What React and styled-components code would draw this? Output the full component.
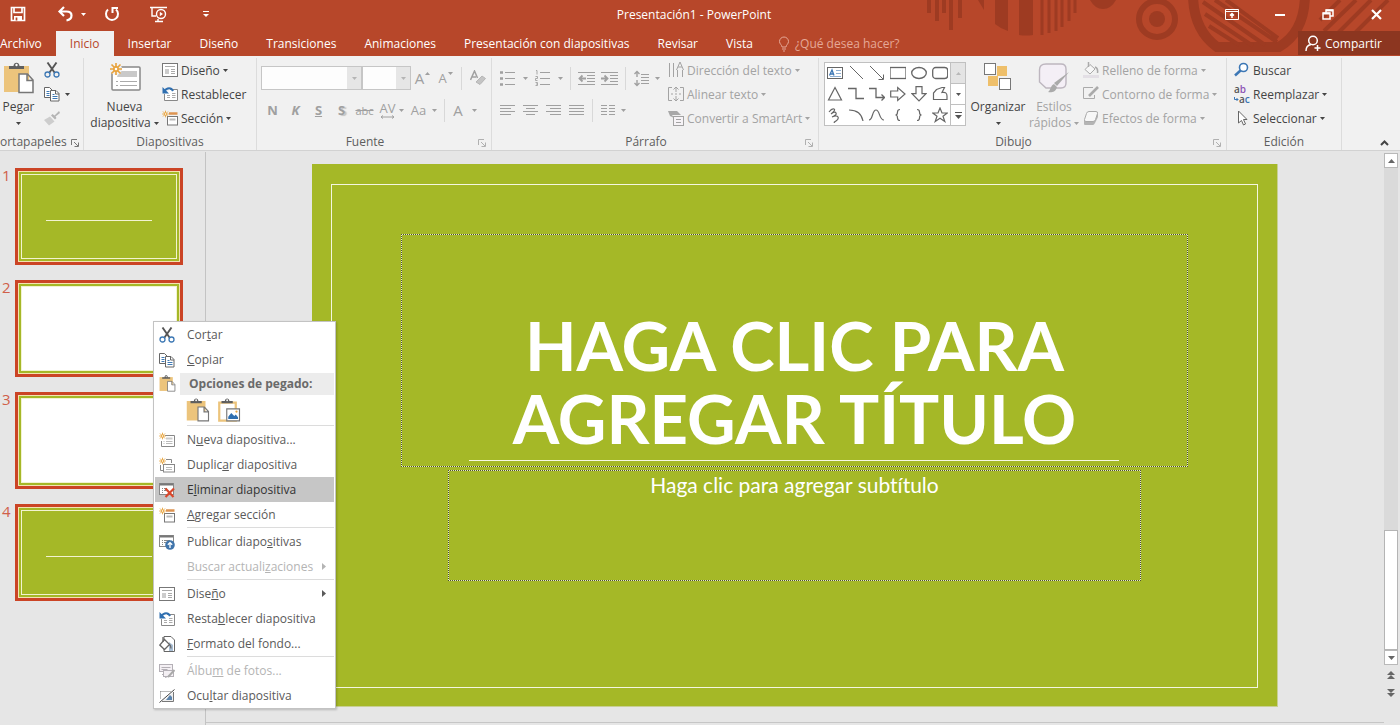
import React from 'react'
import styled, { createGlobalStyle } from "styled-components"

const GlobalStyle = createGlobalStyle`
  * { box-sizing: border-box; }
  body {
    margin: 0;
    font-family: "Open Sans", "Noto Sans", sans-serif;
    font-size: 12px;
    color: #444;
    background: #e6e6e6;
  }
  button, select {
    font: inherit;
    color: inherit;
    background: none;
    border: 0;
    padding: 0;
    margin: 0;
  }
`;

const Page = styled.div`
  display: flex;
  flex-direction: column;
  min-height: 100vh;
  overflow: hidden;
`;

/* ---------- title bar ---------- */

const Header = styled.header`
  position: relative;
  background: #b7472a;
  color: #fff;
`;

const Pattern = styled.svg`
  position: absolute;
  top: 0;
  right: 0;
  color: #9e3b22;
`;

const TitleRow = styled.div`
  position: relative;
  display: grid;
  grid-template-columns: 1fr auto 1fr;
  align-items: center;
  height: 26px;
  margin-right: 12px;
`;

const QuickAccess = styled.div`
  display: flex;
  align-items: center;
  gap: 15px;
  padding-left: 2px;
`;

const QuickButton = styled.button`
  display: flex;
  align-items: center;
  justify-content: center;
  gap: 8px;
  width: ${p => p.$wide ? 44 : 32}px;
  margin-right: ${p => p.$wide ? -12 : 0}px;
  height: 26px;
`;

const WindowTitle = styled.h1`
  margin: 0;
  font-size: 12px;
  font-weight: 400;
  line-height: 26px;
  padding-top: 2px;
`;

const WindowButtons = styled.div`
  display: flex;
  justify-content: flex-end;
  margin-right: -12px;
`;

const WindowButton = styled.button`
  display: flex;
  align-items: center;
  justify-content: center;
  width: 48px;
  height: 26px;
`;

const TabRow = styled.nav`
  position: relative;
  display: flex;
  align-items: stretch;
  height: 30px;
  padding-top: 5px;
`;

const Tab = styled.button`
  height: 25px;
  padding: 0 ${p => p.$first ? "14px 0 0" : "14px"};
  background: ${p => p.$active ? "#f1f1f1" : "none"};
  color: ${p => p.$active ? "#b7472a" : "#fff"};
  white-space: nowrap;
`;

const TellMe = styled.button`
  display: flex;
  align-items: center;
  gap: 5px;
  height: 25px;
  padding-left: 11px;
  color: #e5a897;
`;

const Share = styled.button`
  display: flex;
  align-items: center;
  gap: 4px;
  height: 24px;
  width: 102px;
  margin-left: auto;
  padding-left: 7px;
  background: #8c3620;
`;

/* ---------- ribbon ---------- */

const Ribbon = styled.div`
  display: flex;
  height: 95px;
  padding-top: 2px;
  background: #f1f1f1;
  border-bottom: 1px solid #d2d2d2;
`;

const GroupBox = styled.section`
  display: flex;
  flex-direction: column;
  flex: none;
  width: ${p => p.$width}px;
  border-right: 1px solid #dcdcdc;
`;

const GroupBody = styled.div`
  display: flex;
  height: 76px;
  padding-left: ${p => p.$pad || 0}px;
`;

const GroupFooter = styled.div`
  display: flex;
  align-items: center;
  height: 16px;
`;

const GroupName = styled.span`
  flex: 1;
  text-align: center;
  line-height: 16px;
  color: #5e5e5e;
`;

const Launcher = styled.button`
  width: 18px;
  height: 16px;
  color: ${p => p.$off ? "#b0b0b0" : "#777"};
`;

const Big = styled.button`
  display: flex;
  flex-direction: column;
  align-items: center;
  flex: none;
  width: ${p => p.$width}px;
  padding-top: 4px;
  color: ${p => p.$off ? "#a3a3a3" : "#444"};
  line-height: 16px;
  white-space: nowrap;
`;

const BigIcon = styled.span`
  flex: none;
  height: 37px;
`;

const BigLine = styled.span`
  display: flex;
  align-items: center;
  justify-content: center;
  gap: 3px;
  height: 16px;
`;

const Column = styled.div`
  display: flex;
  flex-direction: column;
  flex: none;
`;

const Small = styled.button`
  display: flex;
  align-items: center;
  gap: 3px;
  height: 24px;
  color: ${p => p.$off ? "#a3a3a3" : "#444"};
  white-space: nowrap;
`;

const ClipIcon = styled.span`
  display: flex;
  margin-left: 7px;
  margin-right: 2px;
`;

const ToolRows = styled.div`
  padding-top: 4px;
  flex: none;
  width: ${p => p.$width}px;
`;

const ToolRow = styled.div`
  display: flex;
  align-items: center;
  height: 32px;
`;

const Tool = styled.button`
  display: flex;
  align-items: center;
  justify-content: center;
  gap: ${p => p.$gap || 6}px;
  flex: none;
  width: ${p => p.$width || 23}px;
  height: 24px;
  color: #a0a0a0;
  font-size: ${p => p.$size || 13}px;
  font-weight: ${p => p.$bold ? 700 : 400};
  font-style: ${p => p.$italic ? "italic" : "normal"};
  text-decoration: ${p => p.$deco || "none"};
  text-shadow: ${p => p.$shadow ? "2px 1px 1px #c4c4c4" : "none"};
`;

const AvText = styled.span`
  line-height: 13px;
`;

const Rule = styled.span`
  flex: none;
  width: 1px;
  height: 23px;
  margin: 0 4px;
  background: #d8d8d8;
`;

const Combo = styled.label`
  position: relative;
  flex: none;
  width: ${p => p.$width}px;
  height: 24px;
  border: 1px solid #c6c6c6;
  background: #fdfdfd;
  select {
    width: 100%;
    height: 22px;
    appearance: none;
  }
`;

const ComboArrow = styled.span`
  position: absolute;
  top: 0;
  right: 0;
  display: flex;
  align-items: center;
  justify-content: center;
  width: 14px;
  height: 22px;
  color: #b5b5b5;
  background: #e6e6e6;
  pointer-events: none;
`;

const Gallery = styled.div`
  display: flex;
  flex: none;
  width: 142px;
  height: 64px;
  margin: 4px 5px 0 0;
  background: #fff;
  border: 1px solid #c0c0c0;
`;

const Shapes = styled.div`
  display: grid;
  flex: 1;
  grid-template-columns: repeat(6, 1fr);
`;

const ShapeButton = styled.button`
  display: flex;
  align-items: center;
  justify-content: center;
  color: #666;
`;

const GallerySide = styled.div`
  display: flex;
  flex-direction: column;
  width: 15px;
  border-left: 1px solid #c0c0c0;
`;

const GalleryArrow = styled.button`
  display: flex;
  align-items: center;
  justify-content: center;
  flex: 1;
  color: ${p => p.$off ? "#b8b8b8" : "#555"};
  background: ${p => p.$off ? "#e4e4e4" : "#fff"};
  & + & { border-top: 1px solid #c0c0c0; }
`;

const Collapse = styled.button`
  align-self: flex-end;
  margin-left: auto;
  width: 31px;
  height: 18px;
`;

/* ---------- workspace ---------- */

const Workspace = styled.main`
  position: relative;
  display: flex;
  flex: 1;
  padding-top: 1px;
`;

const Thumbs = styled.ol`
  display: flex;
  flex-direction: column;
  gap: 15px;
  flex: none;
  width: 206px;
  margin: 0;
  padding: 16px 0 0;
  list-style: none;
  border-right: 1px solid #c3c3c3;
`;

const ThumbItem = styled.li`
  display: flex;
  color: #d0604a;
  font-size: 15px;
  line-height: 14px;
`;

const ThumbNumber = styled.span`
  width: 15px;
  padding-left: 2px;
`;

const Thumb = styled.button`
  width: 168px;
  height: 97px;
  padding: 3px;
  background: #a5b827;
  border: 3px solid #cb4425;
  outline: 1px solid #f3e3b0;
  outline-offset: -4px;
`;

const ThumbPage = styled.span`
  display: block;
  height: 100%;
  padding: 45px 24px 0;
  background: ${p => p.$blank ? "#fff" : "#a5b827"};
  border: 1px solid #f2f3d0;
`;

const ThumbLine = styled.span`
  display: block;
  height: 1px;
  background: #f2f3d0;
`;

const Canvas = styled.section`
  display: flex;
  flex-direction: column;
  align-items: center;
  flex: 1;
  min-width: 0;
  padding-top: 12px;
`;

const Slide = styled.article`
  width: 82%;
  aspect-ratio: 16 / 9;
  padding: 20px 19px 18px;
  background: #a5b827;
  border-right: 1px solid #c8cf93;
  border-bottom: 1px solid #c8cf93;
`;

const SlideFrame = styled.div`
  display: flex;
  flex-direction: column;
  align-items: center;
  height: 100%;
  padding-top: 49px;
  border: 1px solid #f4f6e0;
  color: #fff;
  font-family: Lato, "Open Sans", sans-serif;
  font-variant-ligatures: none;
`;

// the pale layer under the border shows between the dark dots
const Placeholder = styled.div`
  border: 1px dotted #4c5030;
  background:
    linear-gradient(#a5b827, #a5b827) padding-box,
    linear-gradient(#e9edc4, #e9edc4) border-box;
`;

const TitleBox = styled(Placeholder)`
  display: flex;
  flex-direction: column;
  justify-content: flex-end;
  align-items: center;
  width: 85%;
  height: 233px;
  padding-bottom: 5px;
`;

const SlideTitle = styled.h2`
  margin: 0;
  padding-bottom: 5px;
  text-align: center;
  font-size: 67px;
  line-height: 73px;
  font-weight: 700;
  white-space: nowrap;
`;

const TitleLine = styled.hr`
  width: 650px;
  max-width: 100%;
  height: 1px;
  margin: 0;
  border: 0;
  background: #f6f8e4;
`;

const SubtitleBox = styled(Placeholder)`
  width: 75%;
  height: 111px;
  margin-top: 3px;
  text-align: center;
  font-size: 21px;
  line-height: 27px;
`;

const CanvasEdge = styled.div`
  width: 100%;
  height: 1px;
  margin-top: 15px;
  background: #c6c6c6;
`;

const ScrollBar = styled.div`
  display: flex;
  flex-direction: column;
  flex: none;
  width: 14px;
  margin: 1px 2px 24px 0;
  color: #666;
`;

const ScrollTrack = styled.div`
  display: flex;
  flex-direction: column;
  justify-content: flex-end;
  flex: 1;
  background: #dadada;
`;

const ScrollThumb = styled.div`
  height: 25%;
  background: #fff;
  border: 1px solid #b4b4b4;
`;

const ScrollButton = styled.button`
  display: flex;
  align-items: center;
  justify-content: center;
  width: 14px;
  height: 15px;
  background: #fff;
  border: 1px solid #b9b9b9;
`;

const JumpButton = styled.button`
  width: 14px;
  height: 18px;
`;

/* ---------- context menu ---------- */

const Menu = styled.div`
  position: absolute;
  top: 170px;
  left: 153px;
  width: 183px;
  padding: 0 1px;
  background: #fff;
  border: 1px solid #c3c3c3;
  box-shadow: 1px 1px 2px rgba(0, 0, 0, 0.2);
`;

const MenuItem = styled.button`
  display: flex;
  align-items: center;
  width: 100%;
  height: 25px;
  padding: 0 8px 0 4px;
  color: ${p => p.$off ? "#b4b4b4" : p.$active ? "#333" : "#5a5a5a"};
  background: ${p => p.$active ? "#c6c6c6" : "none"};
  text-align: left;
  white-space: nowrap;
`;

const MenuIcon = styled.span`
  display: flex;
  flex: none;
  width: 28px;
`;

const MenuText = styled.span`
  flex: 1;
`;

const MenuSection = styled.div`
  display: flex;
  align-items: center;
  height: 23px;
  padding-left: 4px;
`;

const MenuHeading = styled.span`
  flex: 1;
  margin-left: -7px;
  padding-left: 9px;
  line-height: 22px;
  font-weight: 700;
  color: #6a6a6a;
  background: #ececec;
`;

const PasteRow = styled.div`
  display: flex;
  align-items: center;
  gap: 7px;
  height: 30px;
  padding: 4px 0 0 31px;
`;

const MenuRule = styled.hr`
  height: 2px;
  margin: 0 0 0 32px;
  border: 0;
  border-top: 1px solid #dcdcdc;
`;

/* ---------- icons ---------- */

const Svg = ({ w = 16, h = 16, children, ...rest }) => (
    <svg width={w} height={h} viewBox={`0 0 ${w} ${h}`} fill="none" stroke="currentColor" aria-hidden="true" {...rest}>
        {children}
    </svg>
)

const Caret = () => (
    <Svg w={5} h={3} stroke="none"><path d="M0 0h5L2.5 3z" fill="currentColor" /></Svg>
)

const Star = ({ x = 4, y = 4, r = 4 }) => (
    <g transform={`translate(${x} ${y}) scale(${r / 4})`} stroke="#e8a33d" strokeWidth="1.1">
        <path d="M0-4v8M-4 0h8M-3-3l6 6M3-3l-6 6" />
        <circle r="1.4" fill="#fff" />
    </g>
)

const CutIcon = () => (
    <Svg>
        <path d="M3.5.5l7 10M12.500.5l-7 10" stroke="#555" strokeWidth="1.9" />
        <circle cx="3.5" cy="12.5" r="2.5" stroke="#3d78b4" strokeWidth="1.3" />
        <circle cx="12.5" cy="12.5" r="2.5" stroke="#3d78b4" strokeWidth="1.3" />
    </Svg>
)

const CopyIcon = () => (
    <Svg stroke="#666">
        <path d="M.5 1.5h5l3 3v7h-8z" fill="#fff" />
        <path d="M2.5 5.500h3M2.5 7.500h3M2.5 9.500h3" stroke="#3d78b4" />
        <path d="M6.5 4.500h5.500l3 3v7.500H6.500z" fill="#fff" />
        <path d="M11.5 4.500V8H15" />
        <path d="M8.500 8.500h2M8.500 10.500h5M8.500 12.500h5" stroke="#3d78b4" />
    </Svg>
)

const BrushIcon = () => (
    <Svg stroke="none" fill="#b4b4b4">
        <path d="M15 1l-4.500 4.500L8.500 4 7 5.500l4 4L12.500 8l-1-1.500L16 3z" />
        <path d="M6 6.500L0 10l5 5.500 5.500-4z" fill="#cdcdcd" />
    </Svg>
)

const PasteIcon = ({ size = 30, image }) => (
    <svg width={size} height={size} viewBox="0 0 30 32" fill="none" aria-hidden="true">
        <path d={image ? "M2 6h22v24H2z" : "M0 4h25v26H0z"} fill={image ? "#fff" : "#ecc47c"} stroke={image ? "#ecc47c" : "none"} strokeWidth="3" />
        <path d="M5 7V4h4.500C9.500-.5 15.500-.5 15.500 4H20v3z" fill="#5f5f5f" />
        <circle cx="12.5" cy="3" r="1.2" fill="#fff" />
        {image ? (
            <g>
                <path d="M12 14.500h17v16H12z" fill="#fff" stroke="#777" strokeWidth="1.5" />
                <path d="M14 28v-3l4-5 4 4 2-2 3 3.500V28z" fill="#2f6fb0" />
                <circle cx="25" cy="18" r="1.5" fill="#e8a33d" />
            </g>
        ) : (
            <path d="M15 12h8.500l5.500 6v12.500H15zM23 12v6.500h6" fill="#fff" stroke="#777" strokeWidth="1.5" />
        )}
    </svg>
)

const NewSlideBig = () => (
    <Svg w={32} h={30}>
        <rect x="3" y="5" width="28" height="23" rx="1" fill="#fff" stroke="#888" strokeWidth="1.5" />
        <path d="M10 9h18v6H8z" fill="#c9c9c9" stroke="none" />
        <path d="M7 19.500h2M11 19.500h17M7 23.500h2M11 23.500h17" stroke="#aaa" />
        <circle cx="7" cy="7" r="6" fill="#f1f1f1" stroke="none" />
        <Star x={7} y={7} r={6} />
    </Svg>
)

const LayoutIcon = () => (
    <Svg stroke="#777">
        <rect x=".5" y="1.5" width="15" height="13" fill="#fff" />
        <path d="M3 4.500h10" stroke="#aaa" />
        <path d="M3 7h4v5H3z" fill="#ccc" stroke="none" />
        <path d="M9 7.500h4M9 9.500h4M9 11.500h4" stroke="#aaa" />
    </Svg>
)

const ResetIcon = () => (
    <Svg stroke="#888">
        <path d="M8 3.500h7.500v11h-13V8" fill="#fff" />
        <path d="M5 9.500h3M5 11.500h3M10 7.500h3.500M10 9.500h3.500M10 11.500h3.500" stroke="#aaa" />
        <path d="M2 5.500C5 1 9.500 1.500 11 5" stroke="#2f6fb0" strokeWidth="2" />
        <path d="M.5 1v6.500H7z" fill="#2f6fb0" stroke="none" />
    </Svg>
)

const SectionIcon = () => (
    <Svg stroke="#777">
        <path d="M7 3.500h8.500" stroke="#dd9350" strokeWidth="2.5" />
        <rect x="5.5" y="6.5" width="10" height="8.5" fill="#fff" />
        <path d="M7.500 9.500h6" stroke="#bbb" strokeWidth="2" />
        <Star x={3.5} y={4} r={3.3} />
    </Svg>
)

const NewSlideIcon = () => (
    <Svg stroke="#888">
        <path d="M6 3.500h9.500v11h-13V9" fill="#fff" />
        <path d="M7 5.500h6.500v2H7z" fill="#ccc" stroke="none" />
        <path d="M4.500 9.500h1M7 9.500h6.500M4.500 11.500h1M7 11.500h6.500" stroke="#bbb" />
        <Star x={3.5} y={4} r={3.3} />
    </Svg>
)

const DuplicateIcon = () => (
    <Svg stroke="#888">
        <path d="M7 2.500h5.500V6M1.500 8v5.500H4" />
        <rect x="4.5" y="7.5" width="11" height="7.5" fill="#fff" />
        <path d="M7 10.500h6M7 12.500h6" stroke="#bbb" />
        <Star x={3.5} y={4} r={3.3} />
    </Svg>
)

const DeleteIcon = () => (
    <Svg stroke="#888">
        <rect x=".5" y="1.5" width="14" height="11" fill="#fff" />
        <path d="M1 2.500h13" stroke="#777" strokeWidth="2" />
        <path d="M3 6.500h1M5 6.500h3M3 8.500h1M5 8.500h2M3 10.500h1" />
        <path d="M6.500 6.500l8 8.500M15 6.500L6.500 15" stroke="#d9472b" strokeWidth="2.2" />
    </Svg>
)

const PublishIcon = () => (
    <Svg stroke="#888">
        <rect x=".5" y="1.5" width="14" height="11" fill="#fff" />
        <path d="M1 2.500h13" stroke="#777" strokeWidth="2" />
        <path d="M3 6.500h1M5 6.500h6M3 8.500h1M5 8.500h2M3 10.500h1" />
        <circle cx="11" cy="11" r="4.8" fill="#3f74ab" stroke="none" />
        <path d="M11 14V9M8.800 10.800L11 8.600l2.200 2.200" stroke="#fff" strokeWidth="1.3" />
    </Svg>
)

const BackgroundIcon = () => (
    <Svg stroke="#666">
        <path d="M5 .5h7L15.500 4v11.500H5z" fill="#fff" />
        <path d="M10 6v9h4V9z" fill="#a9bfd6" stroke="none" />
        <path d="M5.500 3.500l5 5-5 5L.8 9z" fill="#fff" strokeWidth="1.3" />
        <path d="M4 1v5M10.500 8.500c1.500 1 1.500 2.500 1.500 4" strokeWidth="1.3" />
    </Svg>
)

const AlbumIcon = () => (
    <Svg stroke="#b4b0b6">
        <rect x=".5" y="1.5" width="13" height="7" fill="#f4f0f4" />
        <path d="M2.500 4.500h9M2.500 6.500h6M3 11.500h3M6 14.500l3-1" />
        <rect x="4.500" y="7.500" width="10" height="6" fill="#f4f0f4" />
        <path d="M15.500 7L9 14" stroke="#aaa" strokeWidth="2" />
    </Svg>
)

const HideIcon = () => (
    <Svg stroke="#777">
        <path d="M1.500 3.500H12M1.500 3.500v8" strokeDasharray="1 1" />
        <path d="M14.500 4v9.500H3" fill="#eee" />
        <path d="M7 12l4-5 2 2v3z" fill="#5b84ad" stroke="none" />
        <path d="M.5 14.500l15-13" stroke="#444" />
    </Svg>
)

const lines = {
    left: [15, 11, 15, 11],
    center: [15, 9, 15, 9],
    right: [15, 11, 15, 11],
    full: [15, 15, 15, 15],
}

const AlignIcon = ({ kind }) => (
    <Svg w={15} h={12}>
        {lines[kind].map((len, i) => {
            const x = kind === "right" ? 15 - len : kind === "center" ? (15 - len) / 2 : 0
            return <path key={i} d={`M${x} ${i * 3 + 1.5}h${len}`} />
        })}
    </Svg>
)

const ListIcon = ({ numbered }) => (
    <Svg w={15} h={16}>
        <path d="M5 2.500h10M5 8.500h10M5 14.500h10" />
        {numbered
            ? <path d="M1 .5h1v4M.5 6.500h2v2h-2v2h2M.5 12.500h2v3h-2M1 14h1" strokeWidth=".9" />
            : <path d="M0 2.500h3M0 8.500h3M0 14.500h3" strokeWidth="2.5" />}
    </Svg>
)

const IndentIcon = ({ back }) => (
    <Svg w={17} h={15}>
        <path d="M0 1.500h17M9 4.500h8M9 7.500h8M9 10.500h8M0 13.500h17" />
        {back
            ? <path d="M8 7.500H2M4.500 4.500l-3 3 3 3" strokeWidth="1.8" />
            : <path d="M0 7.500h6M3.500 4.500l3 3-3 3" strokeWidth="1.8" />}
    </Svg>
)

const SpacingIcon = () => (
    <Svg w={15} h={17}>
        <path d="M3 1v6M3 10v6M.5 4L3 1.500 5.500 4M.5 13L3 15.500 5.500 13" strokeWidth="1.4" />
        <path d="M7 4.500h8M7 7.500h8M7 10.500h8M7 13.500h8" />
    </Svg>
)

const ColumnsIcon = () => (
    <Svg w={14} h={12}><path d="M0 1.500h6M8 1.500h6M0 4.500h6M8 4.500h6M0 7.500h6M8 7.500h6M0 10.500h6M8 10.500h6" /></Svg>
)

const DirectionIcon = () => (
    <Svg><path d="M1.500 1v14M5.500 1v14M9.500 8v7M14.500 8v7M8.500 8L12 0l3.500 8M10 5h4" /></Svg>
)

const AlignTextIcon = () => (
    <Svg>
        <path d="M4 1.500H.5v13H4M12 1.500h3.500v13H12M3 8h2M7 8h2M11 8h2" />
        <path d="M8 1v5M8 10v5M5.500 3.500L8 1l2.500 2.500M5.500 12.500L8 15l2.500-2.500" />
    </Svg>
)

const SmartArtIcon = () => (
    <Svg>
        <path d="M0 1h9l4 4H4l2 3-4-2z" fill="#a8a8a8" stroke="none" />
        <rect x="5.5" y="6.5" width="10" height="9" fill="#f6f3f6" />
        <path d="M8 9.500h5M8 12.500h5" />
    </Svg>
)

const ClearIcon = () => (
    <Svg>
        <path d="M.5 10l4-9 3 7M2 7h4" strokeWidth="1.5" />
        <path d="M6 12l6-6 3.500 2.500-5.500 6z" fill="#c4c4c4" stroke="#b5b5b5" />
    </Svg>
)

const SpacedIcon = () => (
    <Svg w={15} h={4}><path d="M1 2h13M3 .5L1 2l2 1.500M12 .5L14 2l-2 1.500" /></Svg>
)

const UpMark = () => (
    <Svg w={5} h={12} stroke="none"><path d="M0 3h5L2.500 0z" fill="currentColor" /></Svg>
)

const DownMark = () => (
    <Svg w={5} h={12} stroke="none"><path d="M0 0h5L2.500 3z" fill="currentColor" /></Svg>
)

const ArrangeIcon = () => (
    <Svg w={30} h={30} stroke="#777">
        <path d="M14 4h10v10H14zM5 14h10v10H5z" fill="#eebf6a" stroke="none" />
        <rect x="1.5" y="1.5" width="11" height="11" fill="#fff" />
        <rect x="16.500" y="16.500" width="11" height="11" fill="#fff" />
    </Svg>
)

const StylesIcon = () => (
    <Svg w={32} h={32} stroke="#bdb6bf">
        <path d="M8 2h15q5 0 5 5v14q0 5-5 5H8l-6.500-6V8q0-6 6.500-6z" fill="#f4eff6" strokeWidth="1.4" />
        <path d="M31 10L19 24l-3-3z" fill="#aaa" stroke="none" />
        <path d="M16 22l3 3c-1 5-6 6-9 5 3-2 2-6 6-8z" fill="#aaa" stroke="none" />
    </Svg>
)

const FillIcon = () => (
    <Svg stroke="#aaa">
        <path d="M7 2.500L12 7l-5 5-5-4.500z" fill="#f7f7f7" />
        <path d="M5.500 0v5M12 5c3 1 3 3 2.500 6" strokeWidth="1.5" />
        <path d="M0 14.500h16" stroke="#e3dfe5" strokeWidth="3" />
    </Svg>
)

const OutlineIcon = () => (
    <Svg stroke="#aaa"><path d="M10 1.500H.5v11h11V9" /><path d="M15 1l-9 9" strokeWidth="2.6" /></Svg>
)

const EffectsIcon = () => (
    <Svg stroke="#aaa">
        <path d="M1 11v3q0 1 1 1h8q1 0 2-2l3-6V3z" fill="#b4b4b4" stroke="none" />
        <path d="M6 1.500h7q2 0 1.500 2l-2 6q-.5 2-2.500 2H3q-2 0-1.500-2l2-6q.5-2 2.500-2z" fill="#f7f7f7" />
    </Svg>
)

const SearchIcon = () => (
    <Svg stroke="#3c77b5">
        <circle cx="9.5" cy="5.5" r="4" strokeWidth="1.6" fill="#fff" />
        <path d="M6.500 8.500L1 13.500" strokeWidth="2.5" />
    </Svg>
)

const ReplaceBox = styled.span`
  display: flex;
  flex-direction: column;
  width: 16px;
  font-size: 10px;
  font-weight: 600;
  line-height: 10px;
`;

const ReplaceLine = styled.span`
  display: flex;
  align-items: center;
  color: #555;
  em { font-style: normal; color: #8d53b5; }
  i { font-style: normal; color: #3c77b5; }
`;

const ReplaceIcon = () => (
    <ReplaceBox aria-hidden="true">
        <ReplaceLine>a<em>b</em></ReplaceLine>
        <ReplaceLine><Svg w={5} h={5} stroke="#3c77b5"><path d="M.5 0v2.500H4M2.500 1L4 2.500 2.500 4" /></Svg>a<i>c</i></ReplaceLine>
    </ReplaceBox>
)

const SelectIcon = () => (
    <Svg><path d="M4.500 1v12l3-2.500 2 4.500 2-1-2-4.500H13z" fill="#fff" stroke="#666" /></Svg>
)

const shapes = [
    <g><rect x=".5" y="2.500" width="15" height="11" /><path d="M2.500 10.500L5 5l2 5.500M3.500 9h3" stroke="#3c77b5" strokeWidth="1.3" /><path d="M9 5.500h5M9 8.500h5M3 11.500h11" stroke="#8fb0d2" /></g>,
    <path d="M2 1l13 13" />,
    <path d="M1 1l13 13M14.500 9.500v5h-5" />,
    <rect x="0" y="2.500" width="16" height="11" strokeWidth="1.3" />,
    <ellipse cx="8" cy="8" rx="7.3" ry="5.5" strokeWidth="1.3" />,
    <rect x=".7" y="2.500" width="15" height="11" rx="3" strokeWidth="1.3" />,
    <path d="M8 1.500L14.500 14h-13z" strokeWidth="1.2" />,
    <path d="M0 2.500h8v10h8" strokeWidth="1.3" />,
    <path d="M0 2.500h7v9h8M12.500 8.500l3 3-3 3" strokeWidth="1.3" />,
    <path d="M.7 5h7V1.500L15 8l-7.300 6.500V11h-7z" strokeWidth="1.2" />,
    <path d="M5 .7h6v7h4L8 15 1 7.700h4z" strokeWidth="1.2" />,
    <path d="M4.500 3.500L10 1.500h2.500L10 6.500q5-1 5 3.500v3.500H1.500V7z" strokeWidth="1.2" />,
    <path d="M2 5q3-4 5-3T4 7q4-3 5-1t-4 4q5-2 6 0t-2 4-1 1" strokeWidth="1.2" />,
    <path d="M1 3q12 0 14 11" strokeWidth="1.2" />,
    <path d="M0 13C4 13 3 3 7 3s3 10 8 10" strokeWidth="1.2" />,
    <path d="M10 2.500Q7.500 2.500 7.500 5q0 3-2 3 2 0 2 3 0 2.500 2.500 2.500" strokeWidth="1.2" />,
    <path d="M6 2.500Q8.500 2.500 8.500 5q0 3 2 3-2 0-2 3 0 2.500-2.500 2.500" strokeWidth="1.2" />,
    <path d="M8 1l2 5h5.300L11 9.300l1.800 5.200L8 11.300l-4.800 3.200L5 9.300.7 6H6z" strokeWidth="1.2" />,
]

const HeaderPattern = () => (
    <Pattern width="490" height="56" viewBox="910 0 490 56" fill="none" stroke="currentColor" aria-hidden="true">
        <path d="M929 0v13M937 0v21M944 0v13M951 0v30M960 0v18" strokeWidth="4" />
        <path d="M978 0h6v10zM995 0h13v31q-7-2-13-7zM1019 0h14v35q-7 1-14 0z" fill="currentColor" stroke="none" />
        <path d="M1042 0v35M1049 0v33M1056 0v31M1062 0v27M1069 0v21M1075 0v13" strokeWidth="3" />
        <path d="M1090 0q5 9 13 9t13-9z" fill="currentColor" stroke="none" />
        <circle cx="1157" cy="19" r="18" strokeWidth="6" />
        <circle cx="1157" cy="19" r="8" fill="currentColor" stroke="none" />
        <path d="M1193 -6c0 24 9 42 24 53h62c17-10 26-28 26-53" strokeWidth="10" />
        <path d="M1215 0l62 42M1226 0l52 38M1203 2l62 43M1205 14l48 32M1209 26l30 19" strokeWidth="4" />
        <path d="M1340 0l-20 20M1356 0l-32 31M1371 0l-34 34M1388 0l-36 36" strokeWidth="4" />
    </Pattern>
)

/* ---------- parts ---------- */

const Group = ({ name, width, pad, launcher, off, children }) => (
    <GroupBox $width={width} aria-label={name}>
        <GroupBody $pad={pad}>{children}</GroupBody>
        <GroupFooter>
            <GroupName>{name}</GroupName>
            {launcher && (
                <Launcher $off={off} aria-label={`Más opciones de ${name}`}>
                    <Svg w={8} h={8}><path d="M.5 6V.5H6M3 3l4 4M7.500 3.500v4h-4" /></Svg>
                </Launcher>
            )}
        </GroupFooter>
    </GroupBox>
)

const Command = ({ icon, text, label, caret, off }) => (
    <Small $off={off} aria-label={label}>
        {icon}
        {text}
        {caret && <Caret />}
    </Small>
)

const FontCombo = ({ label, width }) => (
    <Combo $width={width}>
        <select aria-label={label} disabled><option value=""></option></select>
        <ComboArrow><Caret /></ComboArrow>
    </Combo>
)

// underline the access key, marked with & in the label
const KeyText = ({ text }) => {
    const i = text.indexOf("&")
    return <>{text.slice(0, i)}<u>{text[i + 1]}</u>{text.slice(i + 2)}</>
}

// null stands for a separator
const menuItems = [
    { text: "N&ueva diapositiva...", icon: <NewSlideIcon /> },
    { text: "Duplic&ar diapositiva", icon: <DuplicateIcon /> },
    { text: "E&liminar diapositiva", icon: <DeleteIcon />, active: true },
    { text: "&Agregar sección", icon: <SectionIcon /> },
    null,
    { text: "Publicar diapo&sitivas", icon: <PublishIcon /> },
    { text: "Buscar actuali&zaciones", off: true, sub: true },
    null,
    { text: "Dise&ño", icon: <LayoutIcon />, sub: true },
    { text: "Resta&blecer diapositiva", icon: <ResetIcon /> },
    { text: "&Formato del fondo...", icon: <BackgroundIcon /> },
    null,
    { text: "Álbu&m de fotos...", icon: <AlbumIcon />, off: true },
    { text: "Ocu&ltar diapositiva", icon: <HideIcon /> },
]

const Entry = ({ item }) => (
    <MenuItem role="menuitem" $off={item.off} $active={item.active}>
        <MenuIcon>{item.icon}</MenuIcon>
        <MenuText><KeyText text={item.text} /></MenuText>
        {item.sub && <Svg w={4} h={7} stroke="none"><path d="M0 0v7l4-3.500z" fill="currentColor" /></Svg>}
    </MenuItem>
)

const ContextMenu = () => (
    <Menu role="menu">
        <Entry item={{ text: "Cor&tar", icon: <CutIcon /> }} />
        <Entry item={{ text: "&Copiar", icon: <CopyIcon /> }} />
        <MenuSection>
            <MenuIcon><PasteIcon size={17} /></MenuIcon>
            <MenuHeading>Opciones de pegado:</MenuHeading>
        </MenuSection>
        <PasteRow>
            <button aria-label="Usar tema de destino"><PasteIcon size={24} /></button>
            <button aria-label="Imagen"><PasteIcon size={24} image /></button>
        </PasteRow>
        <MenuRule />
        {menuItems.map((item, index) => item ? <Entry key={index} item={item} /> : <MenuRule key={index} />)}
    </Menu>
)

const tabs = ["Archivo", "Inicio", "Insertar", "Diseño", "Transiciones", "Animaciones", "Presentación con diapositivas", "Revisar", "Vista"]

export default function App() {
    return (
        <Page>
            <GlobalStyle />
            <Header>
                <HeaderPattern />
                <TitleRow>
                    <QuickAccess>
                        <QuickButton aria-label="Guardar">
                            <Svg strokeWidth="1.7"><path d="M1.500 1.500h13v13h-13zM4 1.500v5h8v-5" /><path d="M4 10h8v5H4z" fill="#fff" stroke="none" /><path d="M6.500 11.500v3" stroke="#b7472a" /></Svg>
                        </QuickButton>
                        <QuickButton aria-label="Deshacer" $wide>
                            <Svg strokeWidth="2.2"><path d="M3 5.500h6.500q5 0 5 4t-5 5M7 1L2.500 5.500 7 10" /></Svg>
                            <Caret />
                        </QuickButton>
                        <QuickButton aria-label="Rehacer">
                            <Svg strokeWidth="2"><path d="M4 3.500a6 6 0 1 0 8 0M8.500 7V2H14" /></Svg>
                        </QuickButton>
                        <QuickButton aria-label="Presentación desde el principio">
                            <Svg w={18} h={17} strokeWidth="1.4"><path d="M0 1.500h17M2 1.500V10h4M5 15.500h8M8 13v2" /><circle cx="11" cy="8" r="4.5" /><path d="M9.800 5.800v4.400L13 8z" fill="#fff" stroke="none" /></Svg>
                        </QuickButton>
                        <QuickButton aria-label="Personalizar barra de acceso rápido">
                            <Svg w={6} h={8}><path d="M0 1.500h6" /><path d="M0 4h6L3 7z" fill="#fff" stroke="none" /></Svg>
                        </QuickButton>
                    </QuickAccess>
                    <WindowTitle>Presentación1 - PowerPoint</WindowTitle>
                    <WindowButtons>
                        <WindowButton aria-label="Opciones de presentación de la cinta">
                            <Svg w={14} h={11}><path d="M.5.5h13v10H.5zM.5 2.500h13" /><path d="M7 9V4.500M5 6.500l2-2 2 2" strokeWidth="1.5" /></Svg>
                        </WindowButton>
                        <WindowButton aria-label="Minimizar"><Svg w={10} h={4}><path d="M0 3h10" strokeWidth="2" /></Svg></WindowButton>
                        <WindowButton aria-label="Restaurar">
                            <Svg w={12} h={11} strokeWidth="1.5"><path d="M1 4h7v6H1zM4 4V1h7v6H8" /><path d="M1 4.500h7M4 1.500h7" strokeWidth="2" /></Svg>
                        </WindowButton>
                        <WindowButton aria-label="Cerrar"><Svg w={11} h={11}><path d="M1 1l9 9M10 1l-9 9" strokeWidth="2.2" /></Svg></WindowButton>
                    </WindowButtons>
                </TitleRow>
                <TabRow>
                    {tabs.map((tab, index) => (
                        <Tab key={tab} $first={index === 0} $active={tab === "Inicio"}>{tab}</Tab>
                    ))}
                    <TellMe>
                        <Svg w={12} h={16}><path d="M4 11c0-2-2.500-3-2.500-5.500a4.500 4.500 0 0 1 9 0C10.500 8 8 9 8 11zM4 13h4M5 15h2" /></Svg>
                        ¿Qué desea hacer?
                    </TellMe>
                    <Share>
                        <Svg w={16} h={17} strokeWidth="1.5"><circle cx="8" cy="5.5" r="4.3" /><path d="M1 16c0-4 2-6 5-6.500M9.500 13h6M12.500 10v6" /></Svg>
                        Compartir
                    </Share>
                </TabRow>
            </Header>

            <Ribbon>
                <Group name="ortapapeles" width={84} launcher>
                    <Big $width={37}>
                        <BigIcon><PasteIcon size={32} /></BigIcon>
                        <BigLine>Pegar</BigLine>
                        <BigLine><Caret /></BigLine>
                    </Big>
                    <Column>
                        <Command label="Cortar" icon={<ClipIcon><CutIcon /></ClipIcon>} />
                        <Command label="Copiar" icon={<ClipIcon><CopyIcon /></ClipIcon>} caret />
                        <Command label="Copiar formato" icon={<ClipIcon><BrushIcon /></ClipIcon>} />
                    </Column>
                </Group>

                <Group name="Diapositivas" width={173} pad={3}>
                    <Big $width={75}>
                        <BigIcon><NewSlideBig /></BigIcon>
                        <BigLine>Nueva</BigLine>
                        <BigLine>diapositiva <Caret /></BigLine>
                    </Big>
                    <Column>
                        <Command icon={<LayoutIcon />} text="Diseño" caret />
                        <Command icon={<ResetIcon />} text="Restablecer" />
                        <Command icon={<SectionIcon />} text="Sección" caret />
                    </Column>
                </Group>

                <Group name="Fuente" width={235} pad={4} launcher off>
                    <ToolRows $width={230}>
                        <ToolRow>
                            <FontCombo label="Fuente" width={101} />
                            <FontCombo label="Tamaño de fuente" width={49} />
                            <Tool $size={15} $gap={1}>A<UpMark /></Tool>
                            <Tool $size={13} $gap={1}>A<DownMark /></Tool>
                            <Rule />
                            <Tool aria-label="Borrar formato"><ClearIcon /></Tool>
                        </ToolRow>
                        <ToolRow>
                            <Tool $bold>N</Tool>
                            <Tool $bold $italic>K</Tool>
                            <Tool $bold $deco="underline">S</Tool>
                            <Tool $bold $shadow>S</Tool>
                            <Tool $size={11} $deco="line-through">abc</Tool>
                            <Tool $width={32} $gap={4}>
                                <Column>
                                    <AvText>AV</AvText>
                                    <SpacedIcon />
                                </Column>
                                <Caret />
                            </Tool>
                            <Tool $width={32}>Aa<Caret /></Tool>
                            <Rule />
                            <Tool $width={32} $size={15} $gap={9}>A<Caret /></Tool>
                        </ToolRow>
                    </ToolRows>
                </Group>

                <Group name="Párrafo" width={327} pad={4} launcher off>
                    <ToolRows $width={172}>
                        <ToolRow>
                            <Tool aria-label="Viñetas" $width={35} $gap={8}><ListIcon /><Caret /></Tool>
                            <Tool aria-label="Numeración" $width={35} $gap={8}><ListIcon numbered /><Caret /></Tool>
                            <Rule />
                            <Tool aria-label="Disminuir nivel de lista"><IndentIcon back /></Tool>
                            <Tool aria-label="Aumentar nivel de lista"><IndentIcon /></Tool>
                            <Rule />
                            <Tool aria-label="Interlineado" $width={33}><SpacingIcon /><Caret /></Tool>
                        </ToolRow>
                        <ToolRow>
                            <Tool aria-label="Alinear a la izquierda"><AlignIcon kind="left" /></Tool>
                            <Tool aria-label="Centrar"><AlignIcon kind="center" /></Tool>
                            <Tool aria-label="Alinear a la derecha"><AlignIcon kind="right" /></Tool>
                            <Tool aria-label="Justificar"><AlignIcon kind="full" /></Tool>
                            <Rule />
                            <Tool aria-label="Columnas" $width={32}><ColumnsIcon /><Caret /></Tool>
                        </ToolRow>
                    </ToolRows>
                    <Column>
                        <Command icon={<DirectionIcon />} text="Dirección del texto" caret off />
                        <Command icon={<AlignTextIcon />} text="Alinear texto" caret off />
                        <Command icon={<SmartArtIcon />} text="Convertir a SmartArt" caret off />
                    </Column>
                </Group>

                <Group name="Dibujo" width={408} pad={5} launcher off>
                    <Gallery>
                        <Shapes>
                            {shapes.map((shape, index) => (
                                <ShapeButton key={index} aria-label={`Forma ${index + 1}`}><Svg>{shape}</Svg></ShapeButton>
                            ))}
                        </Shapes>
                        <GallerySide>
                            <GalleryArrow $off aria-label="Subir"><Svg w={5} h={3} stroke="none"><path d="M0 3h5L2.500 0z" fill="currentColor" /></Svg></GalleryArrow>
                            <GalleryArrow aria-label="Bajar"><Caret /></GalleryArrow>
                            <GalleryArrow aria-label="Más formas"><Svg w={7} h={7}><path d="M0 .5h7" /><path d="M0 3h7L3.500 7z" fill="currentColor" stroke="none" /></Svg></GalleryArrow>
                        </GallerySide>
                    </Gallery>
                    <Big $width={54}>
                        <BigIcon><ArrangeIcon /></BigIcon>
                        <BigLine>Organizar</BigLine>
                        <BigLine><Caret /></BigLine>
                    </Big>
                    <Big $width={58} $off>
                        <BigIcon><StylesIcon /></BigIcon>
                        <BigLine>Estilos</BigLine>
                        <BigLine>rápidos <Caret /></BigLine>
                    </Big>
                    <Column>
                        <Command icon={<FillIcon />} text="Relleno de forma" caret off />
                        <Command icon={<OutlineIcon />} text="Contorno de forma" caret off />
                        <Command icon={<EffectsIcon />} text="Efectos de forma" caret off />
                    </Column>
                </Group>

                <Group name="Edición" width={115} pad={7}>
                    <Column>
                        <Command icon={<SearchIcon />} text="Buscar" />
                        <Command icon={<ReplaceIcon />} text="Reemplazar" caret />
                        <Command icon={<SelectIcon />} text="Seleccionar" caret />
                    </Column>
                </Group>
                <Collapse aria-label="Contraer la cinta de opciones">
                    <Svg w={9} h={6}><path d="M1 5l3.500-3.500L8 5" strokeWidth="2" /></Svg>
                </Collapse>
            </Ribbon>

            <Workspace>
                <Thumbs>
                    {[false, true, true, false].map((blank, index) => (
                        <ThumbItem key={index}>
                            <ThumbNumber>{index + 1}</ThumbNumber>
                            <Thumb aria-label={`Diapositiva ${index + 1}`}>
                                <ThumbPage $blank={blank}>{!blank && <ThumbLine />}</ThumbPage>
                            </Thumb>
                        </ThumbItem>
                    ))}
                </Thumbs>
                <Canvas>
                    <Slide>
                        <SlideFrame>
                            <TitleBox>
                                <SlideTitle>HAGA CLIC PARA<br />AGREGAR TÍTULO</SlideTitle>
                                <TitleLine />
                            </TitleBox>
                            <SubtitleBox>Haga clic para agregar subtítulo</SubtitleBox>
                        </SlideFrame>
                    </Slide>
                    <CanvasEdge />
                </Canvas>
                <ScrollBar>
                    <ScrollButton aria-label="Desplazar arriba"><Svg w={7} h={4} stroke="none"><path d="M0 4h7L3.500 0z" fill="currentColor" /></Svg></ScrollButton>
                    <ScrollTrack><ScrollThumb /></ScrollTrack>
                    <ScrollButton aria-label="Desplazar abajo"><Svg w={7} h={4} stroke="none"><path d="M0 0h7L3.500 4z" fill="currentColor" /></Svg></ScrollButton>
                    <JumpButton aria-label="Diapositiva anterior"><Svg w={8} h={8} stroke="none"><path d="M0 4h8L4 0zM0 8h8L4 4z" fill="currentColor" /></Svg></JumpButton>
                    <JumpButton aria-label="Diapositiva siguiente"><Svg w={8} h={8} stroke="none"><path d="M0 0h8L4 4zM0 4h8L4 8z" fill="currentColor" /></Svg></JumpButton>
                </ScrollBar>
                <ContextMenu />
            </Workspace>
        </Page>
    )
}
